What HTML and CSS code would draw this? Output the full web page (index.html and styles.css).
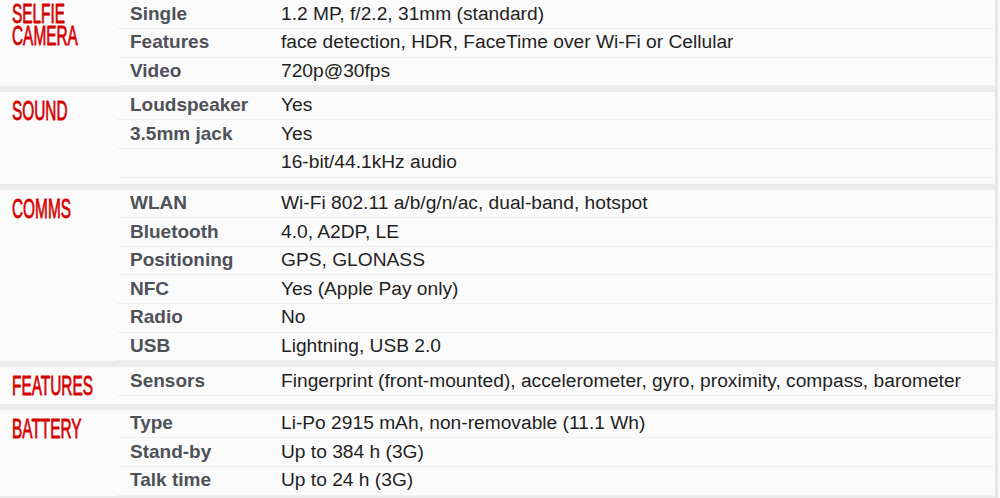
FILE: index.html
```html
<!DOCTYPE html>
<html lang="en">
<head>
<meta charset="utf-8">
<title>Specs</title>
<link rel="stylesheet" href="styles.css">
</head>
<body>
<div class="specs">
  <section class="group group-first">
    <h2 class="group-title"><span class="title-text">SELFIE<br>CAMERA</span></h2>
    <div class="rows">
      <div class="row"><span class="label">Single</span><span class="value">1.2 MP, f/2.2, 31mm (standard)</span></div>
      <div class="row"><span class="label">Features</span><span class="value">face detection, HDR, FaceTime over Wi-Fi or Cellular</span></div>
      <div class="row"><span class="label">Video</span><span class="value">720p@30fps</span></div>
    </div>
  </section>
  <section class="group group-sound">
    <h2 class="group-title"><span class="title-text">SOUND</span></h2>
    <div class="rows">
      <div class="row"><span class="label">Loudspeaker</span><span class="value">Yes</span></div>
      <div class="row"><span class="label">3.5mm jack</span><span class="value">Yes</span></div>
      <div class="row"><span class="label"></span><span class="value">16-bit/44.1kHz audio</span></div>
    </div>
  </section>
  <section class="group">
    <h2 class="group-title"><span class="title-text">COMMS</span></h2>
    <div class="rows">
      <div class="row"><span class="label">WLAN</span><span class="value">Wi-Fi 802.11 a/b/g/n/ac, dual-band, hotspot</span></div>
      <div class="row"><span class="label">Bluetooth</span><span class="value">4.0, A2DP, LE</span></div>
      <div class="row"><span class="label">Positioning</span><span class="value">GPS, GLONASS</span></div>
      <div class="row"><span class="label">NFC</span><span class="value">Yes (Apple Pay only)</span></div>
      <div class="row"><span class="label">Radio</span><span class="value">No</span></div>
      <div class="row"><span class="label">USB</span><span class="value">Lightning, USB 2.0</span></div>
    </div>
  </section>
  <section class="group group-features">
    <h2 class="group-title"><span class="title-text">FEATURES</span></h2>
    <div class="rows">
      <div class="row"><span class="label">Sensors</span><span class="value">Fingerprint (front-mounted), accelerometer, gyro, proximity, compass, barometer</span></div>
    </div>
  </section>
  <section class="group">
    <h2 class="group-title"><span class="title-text">BATTERY</span></h2>
    <div class="rows">
      <div class="row"><span class="label">Type</span><span class="value">Li-Po 2915 mAh, non-removable (11.1 Wh)</span></div>
      <div class="row"><span class="label">Stand-by</span><span class="value">Up to 384 h (3G)</span></div>
      <div class="row"><span class="label">Talk time</span><span class="value">Up to 24 h (3G)</span></div>
    </div>
  </section>
</div>
</body>
</html>
```

FILE: styles.css
```css
html, body {
  margin: 0;
  padding: 0;
  background: #fafafa;
}

body {
  font-family: "Liberation Sans", Arial, sans-serif;
  width: 1000px;
  height: 498px;
  overflow: hidden;
}

.specs {
  width: 995px;
  border-right: 3px solid #e6e6e6;
  background: #fafafa;
}

.group {
  display: grid;
  grid-template-columns: 117px 1fr;
  border-bottom: 6px solid #ebebeb;
}

.group-first .rows {
  padding-top: 1px;
}

.group-first .row {
  height: 28.3px;
}

.group-sound .rows {
  padding-bottom: 6px;
}

.group-features .rows {
  padding-bottom: 8px;
}

.group-title {
  margin: 0;
  padding: 8px 0 0 12px;
  font-weight: normal;
  font-size: 28px;
  line-height: 22px;
  color: #d50000;
  -webkit-text-stroke: 0.8px #d50000;
}

.group-first .group-title {
  padding-top: 3px;
}

.title-text {
  display: inline-block;
  transform: scaleX(0.55);
  transform-origin: left top;
  white-space: nowrap;
}

.rows {
  display: flex;
  flex-direction: column;
}

.row {
  display: grid;
  grid-template-columns: 164px 1fr;
  height: 28.6px;
  box-sizing: border-box;
  padding-bottom: 1px;
  border-bottom: 1px solid #efefef;
  align-items: center;
  font-size: 19px;
  line-height: 22px;
  margin-right: 2px;
}

.label {
  padding-left: 13px;
  font-weight: bold;
  color: #4e5158;
}

.value {
  font-size: 19.2px;
  color: #1f1f1f;
}
```
